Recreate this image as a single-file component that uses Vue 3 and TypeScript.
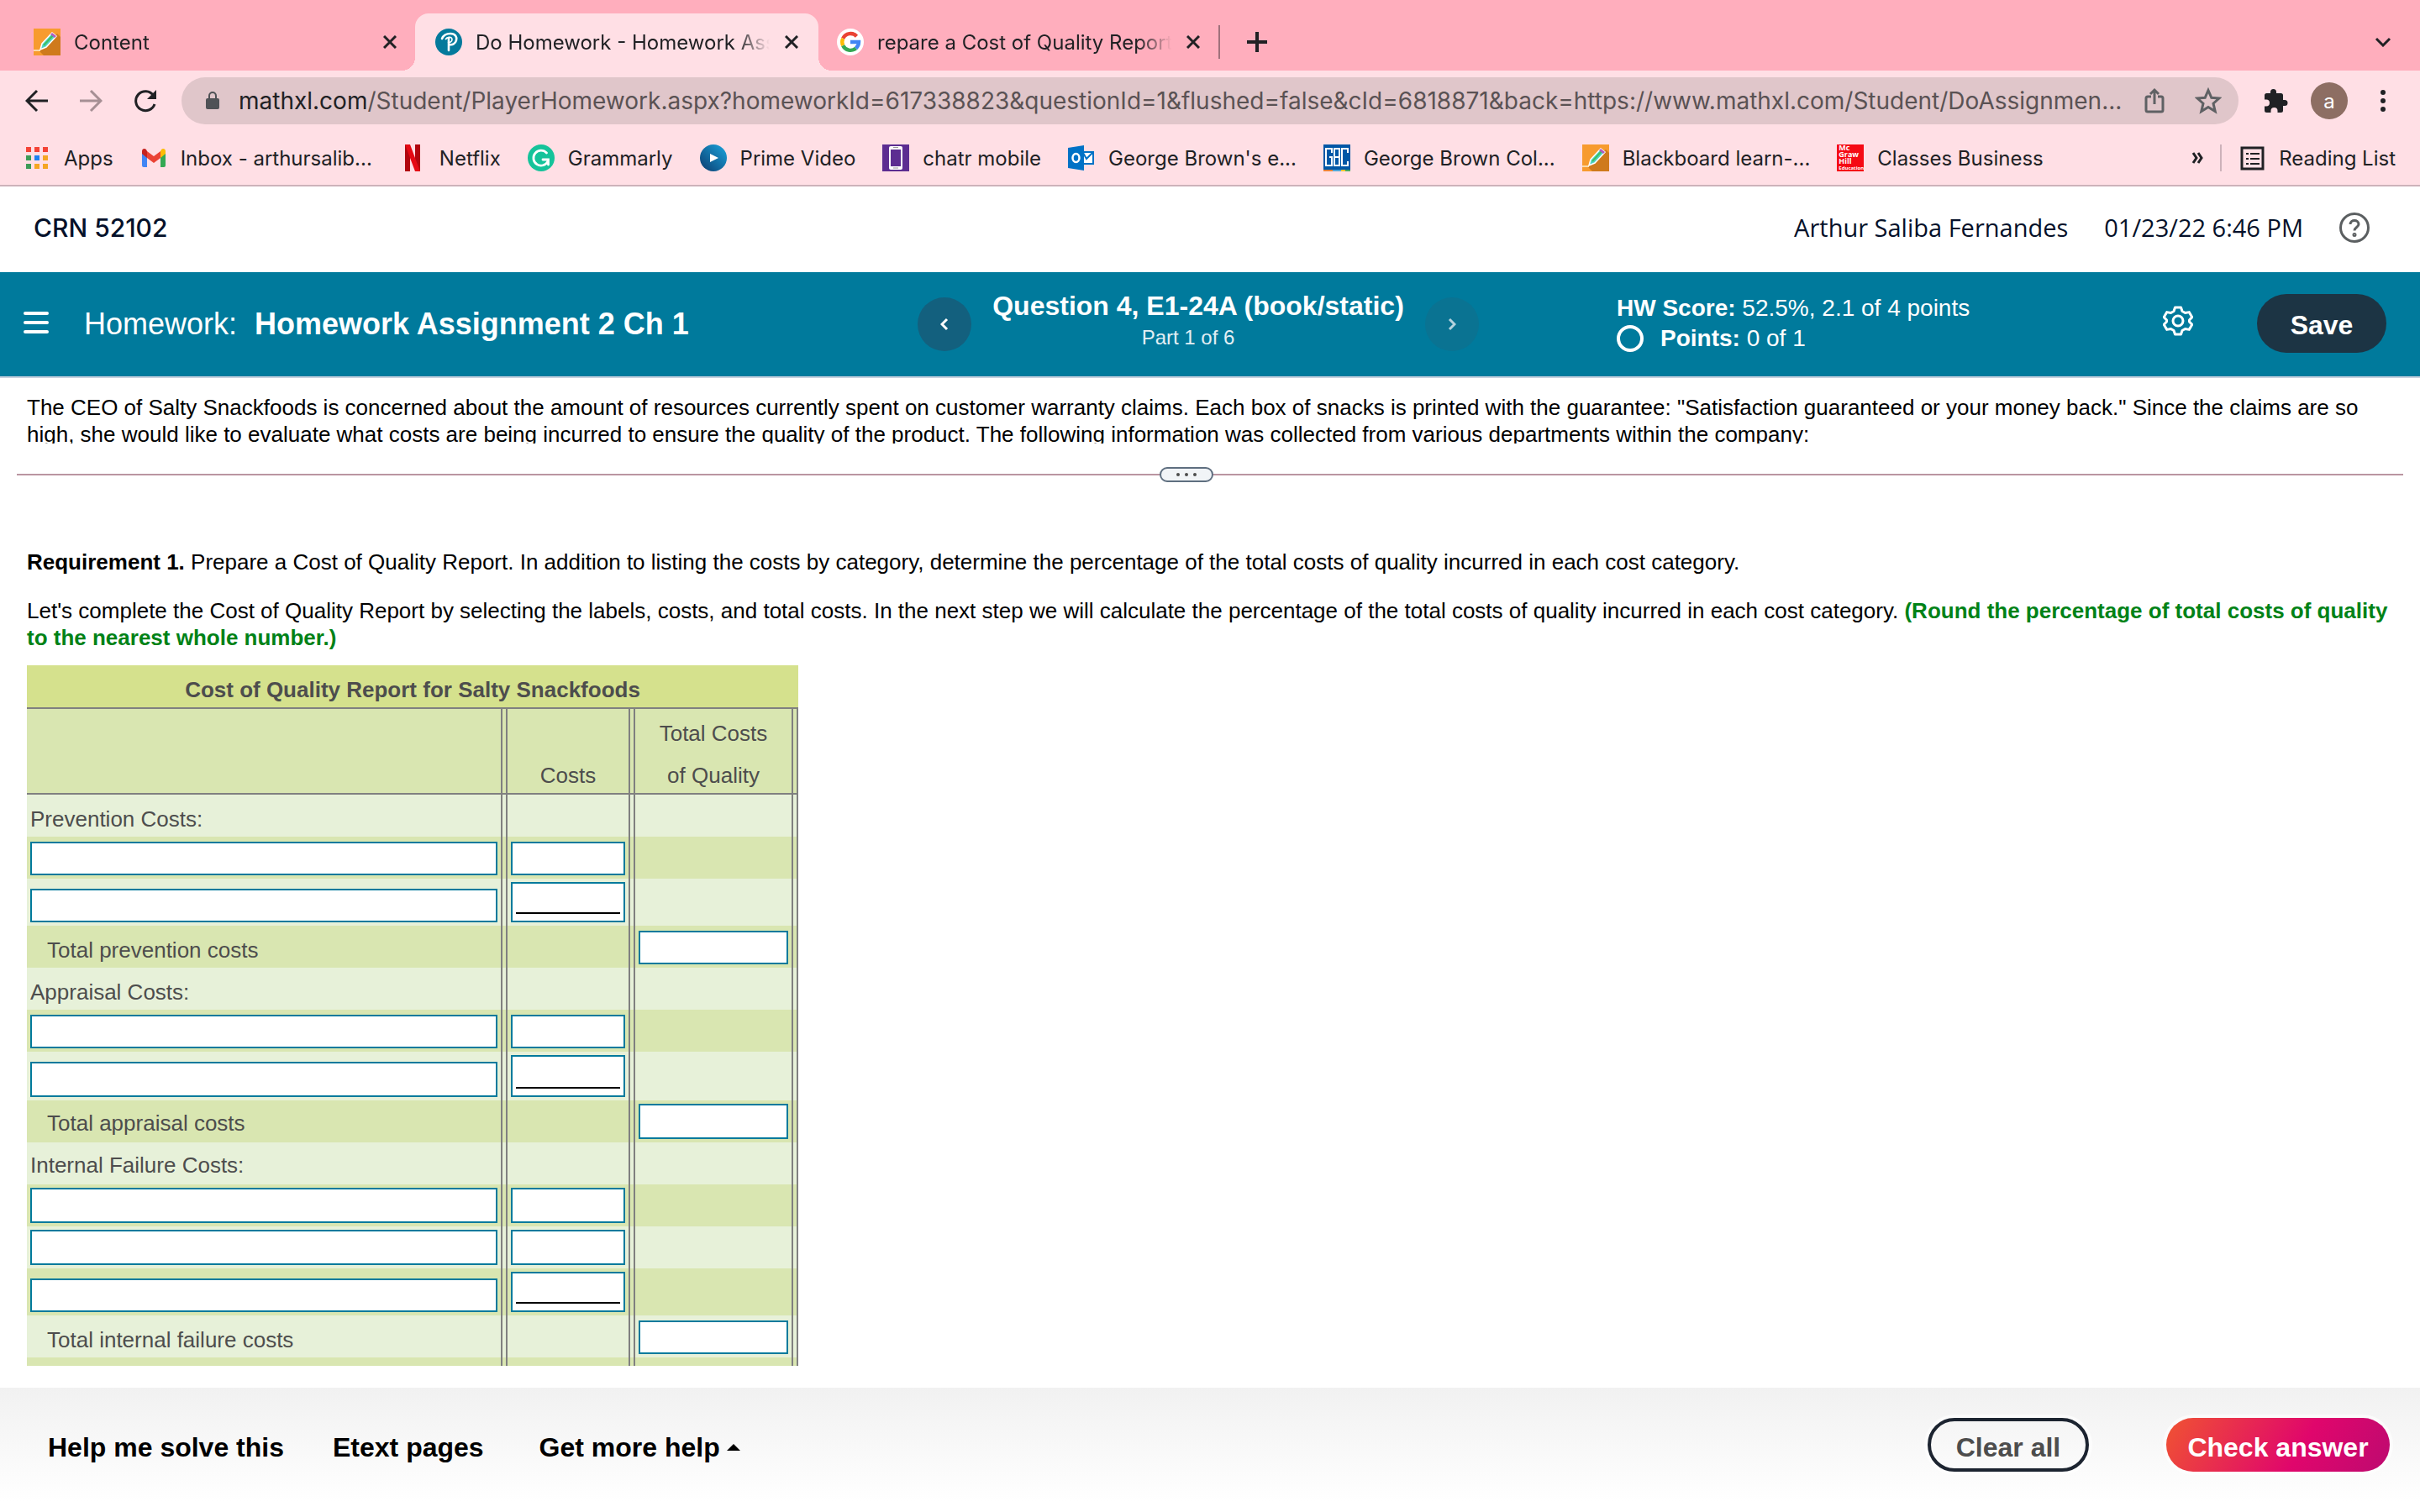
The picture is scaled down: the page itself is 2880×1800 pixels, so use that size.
<script setup lang="ts">
import { ref } from 'vue'

interface Bookmark {
  label: string
  icon: string
}

interface Row {
  label?: string
  total?: boolean
  cost?: boolean
  underlined?: boolean
  tall?: boolean
}

const bookmarks: Bookmark[] = [
  { label: 'Apps', icon: 'apps' },
  { label: 'Inbox - arthursalib...', icon: 'gmail' },
  { label: 'Netflix', icon: 'netflix' },
  { label: 'Grammarly', icon: 'grammarly' },
  { label: 'Prime Video', icon: 'prime' },
  { label: 'chatr mobile', icon: 'chatr' },
  { label: "George Brown's e...", icon: 'outlook' },
  { label: 'George Brown Col...', icon: 'gbc' },
  { label: 'Blackboard learn-...', icon: 'pencil' },
  { label: 'Classes Business', icon: 'mcgraw' },
]

const rows = ref<Row[]>([
  { label: 'Prevention Costs:' },
  { cost: true },
  { cost: true, underlined: true },
  { label: 'Total prevention costs', total: true },
  { label: 'Appraisal Costs:' },
  { cost: true },
  { cost: true, underlined: true, tall: true },
  { label: 'Total appraisal costs', total: true, tall: true },
  { label: 'Internal Failure Costs:', tall: true },
  { cost: true, tall: true },
  { cost: true, tall: true },
  { cost: true, underlined: true },
  { label: 'Total internal failure costs', total: true },
  {},
])
</script>

<template>
  <div class="window">
    <header class="browser">
      <div class="tabstrip" role="tablist">
        <div class="tab first" role="tab">
          <svg class="fav" viewBox="0 0 32 32">
            <rect width="32" height="32" fill="#f79b2e" />
            <path d="M28 6L32 10V32H12L6 26Z" fill="#cf7a1c" />
            <path d="M0 26h8" stroke="#fbd9a8" stroke-width="2" />
            <path d="M8 25L10 18L22 5L27 9L15 22Z" fill="#4fd3c4" stroke="#fff" stroke-width="1.5" />
            <path d="M12 20L23 8" stroke="#3fbf62" stroke-width="2" />
            <path d="M22 5L27 9L25 11L20 7Z" fill="#b05cc0" />
          </svg>
          <span class="tab-title">Content</span>
          <button class="close" aria-label="Close tab"><svg viewBox="0 0 16 16"><path d="M1 1L15 15M15 1L1 15" /></svg></button>
        </div>
        <div class="tab active" role="tab" aria-selected="true">
          <svg class="fav" viewBox="0 0 32 32">
            <circle cx="16" cy="16" r="16" fill="#047a9c" />
            <path d="M8 12C10 7 14 6 18 6C24 6 26 10 25 14C24 18 20 20 17 19M16 11V26" fill="none" stroke="#fff" stroke-width="2.6" stroke-linecap="round" />
            <path d="M12 13C14 10 20 9 20 13C20 16 17 17 15 16" fill="none" stroke="#fff" stroke-width="1.6" />
          </svg>
          <span class="tab-title">Do Homework - Homework Ass</span>
          <button class="close" aria-label="Close tab"><svg viewBox="0 0 16 16"><path d="M1 1L15 15M15 1L1 15" /></svg></button>
        </div>
        <div class="tab last" role="tab">
          <svg class="fav" viewBox="0 0 32 32">
            <circle cx="16" cy="16" r="16" fill="#fff" />
            <g fill="none" stroke-width="4.4">
              <path d="M23.5 9.2A10 10 0 0 0 7.2 11.8" stroke="#ea4335" />
              <path d="M7.2 11.8A10 10 0 0 0 7.2 20.2" stroke="#fbbc05" />
              <path d="M7.2 20.2A10 10 0 0 0 22.6 23.5" stroke="#34a853" />
              <path d="M22.6 23.5A10 10 0 0 0 26 16H16" stroke="#4285f4" />
            </g>
          </svg>
          <span class="tab-title">repare a Cost of Quality Report</span>
          <button class="close" aria-label="Close tab"><svg viewBox="0 0 16 16"><path d="M1 1L15 15M15 1L1 15" /></svg></button>
        </div>
        <span class="tab-divider"></span>
        <button class="new-tab" aria-label="New tab"><svg viewBox="0 0 24 24"><path d="M12 0V24M0 12H24" stroke-width="4" /></svg></button>
        <button class="tab-search" aria-label="Search tabs"><svg viewBox="0 0 20 12"><path d="M2 2L10 10L18 2" stroke-width="3" /></svg></button>
      </div>

      <div class="toolbar">
        <button aria-label="Back"><svg class="nav-icon" viewBox="0 0 28 28"><path d="M27 14H3M14 2L2 14L14 26" stroke-width="3" /></svg></button>
        <button aria-label="Forward"><svg class="nav-icon dim" viewBox="0 0 28 28"><path d="M1 14H25M14 2L26 14L14 26" stroke-width="3" /></svg></button>
        <button aria-label="Reload">
          <svg class="nav-icon" viewBox="0 0 28 28">
            <path d="M26 18A11.500 11.500 0 1 1 24.500 7.500" stroke-width="3" />
            <path d="M28 1V12H17Z" fill="#202124" stroke="none" />
          </svg>
        </button>
        <div class="omnibox">
          <svg class="lock" viewBox="0 0 18 24"><rect x="1" y="9" width="16" height="13" rx="2" fill="#4f5256" /><path d="M5 10V6a4 4 0 0 1 8 0v4" fill="none" stroke="#4f5256" stroke-width="2" /></svg>
          <span class="url"><b>mathxl.com</b>/Student/PlayerHomework.aspx?homeworkId=617338823&amp;questionId=1&amp;flushed=false&amp;cId=6818871&amp;back=https://www.mathxl.com/Student/DoAssignmen...</span>
          <button aria-label="Share"><svg class="share" viewBox="0 0 24 32"><path d="M8 11H4a2 2 0 0 0-2 2V27a2 2 0 0 0 2 2H20a2 2 0 0 0 2-2V13a2 2 0 0 0-2-2H16M12 20V3M7 8L12 3L17 8" /></svg></button>
          <button aria-label="Bookmark this tab"><svg class="star" viewBox="0 0 32 32"><path d="M16 3.500L19.800 12.300L29 13L22 19.200L24.200 28.500L16 23.500L7.800 28.500L10 19.200L3 13L12.200 12.300Z" /></svg></button>
        </div>
        <button aria-label="Extensions">
          <svg class="puzzle" viewBox="0 0 30 30"><path d="M25 14h-2V8.500A2.500 2.500 0 0 0 20.500 6H15V4.500a3.500 3.500 0 0 0-7 0V6H3.500A2.500 2.500 0 0 0 1 8.500V13.500H3a4 4 0 0 1 0 8H1V26.500A2.500 2.500 0 0 0 3.500 29H8.500V27a4 4 0 0 1 8 0v2H20.500A2.500 2.500 0 0 0 23 26.500V21h2a3.500 3.500 0 0 0 0-7z" fill="#202124" /></svg>
        </button>
        <button class="avatar" aria-label="Profile">a</button>
        <button aria-label="Browser menu"><svg class="kebab" viewBox="0 0 8 28"><circle cx="4" cy="4" r="3" /><circle cx="4" cy="14" r="3" /><circle cx="4" cy="24" r="3" /></svg></button>
      </div>

      <nav class="bookmarks" aria-label="Bookmarks">
        <a v-for="b in bookmarks" :key="b.label" href="#" class="bookmark">
          <svg v-if="b.icon === 'apps'" class="fav" viewBox="0 0 32 32">
            <g fill="#f44336"><rect x="3" y="3" width="6" height="6" /><rect x="13" y="3" width="6" height="6" /><rect x="23" y="3" width="6" height="6" /></g>
            <rect x="3" y="13" width="6" height="6" fill="#3d9b57" /><rect x="13" y="13" width="6" height="6" fill="#1e80f0" /><rect x="23" y="13" width="6" height="6" fill="#f5a623" />
            <rect x="3" y="23" width="6" height="6" fill="#3d9b57" /><rect x="13" y="23" width="6" height="6" fill="#f5a623" /><rect x="23" y="23" width="6" height="6" fill="#f5a623" />
          </svg>
          <svg v-else-if="b.icon === 'gmail'" class="fav" viewBox="0 0 32 32">
            <path d="M2 8V25a2 2 0 0 0 2 2H8V14Z" fill="#4285f4" />
            <path d="M30 8V25a2 2 0 0 1-2 2H24V14Z" fill="#34a853" />
            <path d="M24 8V16L30 11V8C30 5 27 4 25 6Z" fill="#fbbc04" />
            <path d="M2 8V11L8 16V8L7 6C5 4 2 5 2 8Z" fill="#c5221f" />
            <path d="M8 8L16 14L24 8V16L16 22L8 16Z" fill="#ea4335" />
          </svg>
          <svg v-else-if="b.icon === 'netflix'" class="fav" viewBox="0 0 32 32">
            <path d="M7 0H13V32L7 32Z" fill="#b1060f" /><path d="M19 0H25V32H19Z" fill="#b1060f" /><path d="M7 0H13L25 32H19Z" fill="#e50914" />
          </svg>
          <svg v-else-if="b.icon === 'grammarly'" class="fav" viewBox="0 0 32 32">
            <circle cx="16" cy="16" r="16" fill="#15c39a" />
            <path d="M22.500 10A9 9 0 1 0 24 20M18 18H24.500V24" fill="none" stroke="#fff" stroke-width="2.800" stroke-linecap="round" />
          </svg>
          <svg v-else-if="b.icon === 'prime'" class="fav" viewBox="0 0 32 32">
            <defs><linearGradient id="prime" x1="1" y1="0" x2="0" y2="1"><stop offset="0" stop-color="#1aa6de" /><stop offset="1" stop-color="#0c3a6e" /></linearGradient></defs>
            <circle cx="16" cy="16" r="16" fill="url(#prime)" /><path d="M12 11L22 16L12 21Z" fill="#fff" />
          </svg>
          <svg v-else-if="b.icon === 'chatr'" class="fav" viewBox="0 0 32 32">
            <rect width="32" height="32" fill="#5c2d91" /><rect x="8" y="2" width="16" height="28" rx="2" fill="#fff" /><rect x="10" y="6" width="12" height="20" fill="#5c2d91" /><rect x="13" y="3" width="6" height="1" fill="#999" /><rect x="13" y="27" width="6" height="2" fill="#ccc" />
          </svg>
          <svg v-else-if="b.icon === 'outlook'" class="fav" viewBox="0 0 32 32">
            <rect x="17" y="9" width="13" height="14" fill="#fff" stroke="#0072c6" stroke-width="2" /><path d="M18 10L22 17L30 9" fill="none" stroke="#0072c6" stroke-width="2" />
            <path d="M0 4L19 1V31L0 28Z" fill="#0072c6" /><ellipse cx="9.500" cy="16" rx="4" ry="5" fill="none" stroke="#fff" stroke-width="2.500" />
          </svg>
          <svg v-else-if="b.icon === 'gbc'" class="fav" viewBox="0 0 32 32">
            <rect width="32" height="32" fill="#0057a6" />
            <g fill="none" stroke="#fff" stroke-width="2"><path d="M10 10V5H3V25H10V15H7M13 5V25H19V16L18 15L19 14V5ZM13 15H18M29 10V5H22V25H29V20" /></g>
            <rect y="30" width="11" height="2" fill="#e8833a" /><rect x="11" y="30" width="10" height="2" fill="#4fa6d8" /><rect x="21" y="30" width="5" height="2" fill="#f4c430" /><rect x="26" y="30" width="6" height="2" fill="#48a860" />
          </svg>
          <svg v-else-if="b.icon === 'pencil'" class="fav" viewBox="0 0 32 32">
            <rect width="32" height="32" fill="#f79b2e" />
            <path d="M28 6L32 10V32H12L6 26Z" fill="#cf7a1c" />
            <path d="M0 26h8" stroke="#fbd9a8" stroke-width="2" />
            <path d="M8 25L10 18L22 5L27 9L15 22Z" fill="#4fd3c4" stroke="#fff" stroke-width="1.5" />
            <path d="M12 20L23 8" stroke="#3fbf62" stroke-width="2" />
            <path d="M22 5L27 9L25 11L20 7Z" fill="#b05cc0" />
          </svg>
          <span v-else class="fav mcgraw"><span>Mc</span><span>Graw</span><span>Hill</span><small>Education</small></span>
          <span>{{ b.label }}</span>
        </a>
        <button class="more" aria-label="More bookmarks"><svg viewBox="0 0 14 14"><path d="M2 1L6 7L2 13M8 1L12 7L8 13" /></svg></button>
        <span class="mark-divider"></span>
        <a href="#" class="bookmark reading">
          <svg class="fav" viewBox="0 0 32 32"><rect x="4" y="4" width="25" height="25" fill="none" stroke="#202124" stroke-width="3" /><path d="M9 11h3M9 17h3M9 23h3M14 11h11M14 17h11M14 23h11" stroke="#202124" stroke-width="2" /></svg>
          <span>Reading List</span>
        </a>
      </nav>
    </header>

    <div class="course">
      <span class="crn">CRN 52102</span>
      <span>Arthur Saliba Fernandes</span>
      <time>01/23/22 6:46 PM</time>
      <button aria-label="Help"><svg class="help" viewBox="0 0 36 36"><circle cx="18" cy="18" r="16.500" /><path d="M13 14C13 8 23 8 23 14C23 17.500 18 17.500 18 21.500" /><circle cx="18" cy="26.500" r="1" /></svg></button>
    </div>

    <div class="banner">
      <div class="banner-left">
        <button aria-label="Menu"><svg class="burger" viewBox="0 0 30 26"><path d="M2 2H28M2 13H28M2 24H28" /></svg></button>
        <h1><span>Homework:</span> <b>Homework Assignment 2 Ch 1</b></h1>
      </div>
      <div class="stepper">
        <button class="round" aria-label="Previous question"><svg viewBox="0 0 10 16"><path d="M8 2L2 8L8 14" /></svg></button>
        <div class="question">
          <h2>Question 4, E1-24A (book/static)</h2>
          <p>Part 1 of 6</p>
        </div>
        <button class="round faded" aria-label="Next question"><svg viewBox="0 0 10 16"><path d="M2 2L8 8L2 14" /></svg></button>
      </div>
      <div class="banner-right">
        <div class="score">
          <p><b>HW Score:</b> 52.5%, 2.1 of 4 points</p>
          <p class="points"><svg viewBox="0 0 32 32"><circle cx="16" cy="16" r="14" /></svg><span><b>Points:</b> 0 of 1</span></p>
        </div>
        <button class="settings" aria-label="Settings">
          <svg viewBox="0 0 36 36"><path d="M14.500 2h7l1.500 4.500 3.500 2 4.700-.9 3.500 6-3.200 3.400v2l3.200 3.400-3.500 6-4.700-.9-3.500 2L21.500 34h-7L13 29.500l-3.500-2-4.700.9-3.500-6L4.500 19v-2L1.300 13.600l3.500-6 4.700.9 3.500-2Z" /><circle cx="18" cy="18" r="6" /></svg>
        </button>
        <button class="save">Save</button>
      </div>
    </div>

    <main class="work">
      <div class="prompt">The CEO of Salty Snackfoods is concerned about the amount of resources currently spent on customer warranty claims. Each box of snacks is printed with the guarantee: "Satisfaction guaranteed or your money back." Since the claims are so high, she would like to evaluate what costs are being incurred to ensure the quality of the product. The following information was collected from various departments within the company:</div>
      <div class="splitter">
        <button aria-label="Resize panes"><i></i><i></i><i></i></button>
      </div>
      <div class="answer">
        <p><b>Requirement 1.</b> Prepare a Cost of Quality Report. In addition to listing the costs by category, determine the percentage of the total costs of quality incurred in each cost category.</p>
        <p>Let's complete the Cost of Quality Report by selecting the labels, costs, and total costs. In the next step we will calculate the percentage of the total costs of quality incurred in each cost category. <b class="hint">(Round the percentage of total costs of quality to the nearest whole number.)</b></p>
        <table>
          <colgroup><col class="c1" /><col class="c2" /><col class="c3" /></colgroup>
          <thead>
            <tr class="title"><th colspan="3">Cost of Quality Report for Salty Snackfoods</th></tr>
            <tr class="heads">
              <th></th>
              <th><span>Costs</span></th>
              <th><span>Total Costs</span><span>of Quality</span></th>
            </tr>
          </thead>
          <tbody>
            <tr v-for="(row, i) in rows" :key="i" :class="{ tall: row.tall }">
              <td>
                <span v-if="row.label" class="label" :class="{ indent: row.total }">{{ row.label }}</span>
                <input v-else-if="row.cost" type="text" :aria-label="'Cost label, row ' + (i + 1)" />
              </td>
              <td>
                <span v-if="row.underlined" class="sum"><input type="text" :aria-label="'Cost, row ' + (i + 1)" /></span>
                <input v-else-if="row.cost" type="text" :aria-label="'Cost, row ' + (i + 1)" />
              </td>
              <td><input v-if="row.total" type="text" :aria-label="row.label" /></td>
            </tr>
          </tbody>
        </table>
      </div>
    </main>

    <footer class="actions">
      <button class="link">Help me solve this</button>
      <button class="link">Etext pages</button>
      <button class="link">Get more help<svg viewBox="0 0 16 8"><path d="M0 8L8 0L16 8Z" /></svg></button>
      <button class="pill clear">Clear all</button>
      <button class="pill check">Check answer</button>
    </footer>
  </div>
</template>

<style>
body {
  margin: 0;
  background: #fff;
}
</style>

<style scoped>
* {
  box-sizing: border-box;
}
.window {
  height: 100vh;
  display: flex;
  flex-direction: column;
  overflow: hidden;
  font-family: "Liberation Sans", Arial, sans-serif;
  color: #000;
}
button {
  border: 0;
  background: none;
  padding: 0;
  margin: 0;
  font: inherit;
  color: inherit;
  display: flex;
  align-items: center;
  justify-content: center;
  flex: none;
}
p,
h1,
h2 {
  margin: 0;
  font-weight: 400;
}
svg {
  display: block;
  flex: none;
}

/* browser frame */
.browser {
  flex: none;
  font-family: Inter, "Noto Sans", sans-serif;
  font-size: 24px;
  color: #202124;
  background: #ffdfe5;
  border-bottom: 2px solid #cdb2ba;
}
.tabstrip {
  height: 84px;
  padding-top: 16px;
  display: flex;
  align-items: center;
  background: #ffaebd;
}
.tabstrip svg,
.toolbar svg {
  fill: none;
  stroke: #202124;
}
.tabstrip .fav {
  stroke: none;
}
.fav {
  width: 32px;
  height: 32px;
  flex: none;
}
.tab {
  width: 480px;
  height: 68px;
  padding: 0 22px 0 24px;
  display: flex;
  align-items: center;
  gap: 16px;
}
.tab.first {
  width: 494px;
  padding: 0 20px 0 40px;
}
.tab.active {
  position: relative;
  background: #ffdfe5;
  border-radius: 16px 16px 0 0;
}
.tab.active::before,
.tab.active::after {
  content: "";
  position: absolute;
  bottom: 0;
  width: 16px;
  height: 16px;
}
.tab.active::before {
  right: 100%;
  background: radial-gradient(circle at 0 0, transparent 16px, #ffdfe5 16px);
}
.tab.active::after {
  left: 100%;
  background: radial-gradient(circle at 100% 0, transparent 16px, #ffdfe5 16px);
}
.tab.last {
  width: 476px;
  padding: 0 20px 0 22px;
}
.tab-title {
  flex: 1;
  min-width: 0;
  overflow: hidden;
  white-space: nowrap;
  mask-image: linear-gradient(to right, #000 calc(100% - 40px), transparent);
}
.close svg {
  width: 16px;
  height: 16px;
  stroke-width: 3;
}
.close {
  width: 20px;
}
.tab-divider {
  width: 2px;
  height: 40px;
  background: #a0717b;
}
.new-tab {
  margin-left: 32px;
}
.new-tab svg {
  width: 24px;
  height: 24px;
}
.tab-search {
  margin-left: auto;
  margin-right: 34px;
}
.tab-search svg {
  width: 20px;
  height: 12px;
}
.toolbar {
  height: 72px;
  display: flex;
  align-items: center;
  padding: 0 40px 0 30px;
}
.nav-icon {
  width: 28px;
  height: 28px;
  margin-right: 36px;
}
.toolbar .dim {
  stroke: #a68f94;
}
.omnibox {
  flex: 1;
  min-width: 0;
  height: 56px;
  margin-right: 30px;
  margin-left: -6px;
  padding: 0 20px 0 28px;
  border-radius: 28px;
  background: #e0c6ca;
  display: flex;
  align-items: center;
}
.lock {
  width: 18px;
  height: 24px;
  margin-right: 22px;
}
.toolbar .lock {
  stroke: none;
}
.url {
  flex: 1;
  min-width: 0;
  overflow: hidden;
  white-space: nowrap;
  font-size: 28px;
  color: #5a5254;
}
.url b {
  font-weight: 400;
  color: #202124;
}
.share {
  width: 24px;
  height: 32px;
  stroke-width: 3;
  margin-right: 36px;
}
.star {
  width: 32px;
  height: 32px;
  stroke-width: 3;
}
.toolbar .share,
.toolbar .star {
  stroke: #5f6164;
}
.puzzle {
  width: 30px;
  height: 30px;
}
.toolbar .puzzle {
  stroke: none;
}
.avatar {
  width: 44px;
  height: 44px;
  margin: 0 38px 0 26px;
  border-radius: 50%;
  background: #8d6e63;
  color: #fff;
}
.kebab {
  width: 8px;
  height: 28px;
}
.toolbar .kebab {
  fill: #202124;
  stroke: none;
}
.bookmarks {
  height: 64px;
  padding: 0 29px 0 28px;
  display: flex;
  align-items: center;
  gap: 32px;
}
.bookmark {
  display: flex;
  align-items: center;
  gap: 16px;
  white-space: nowrap;
  color: inherit;
  text-decoration: none;
}
.mcgraw {
  display: flex;
  flex-direction: column;
  padding-left: 2px;
  background: #f50a14;
  color: #fff;
  font: bold 9px/8px "Open Sans", sans-serif;
}
.mcgraw small {
  font-size: 6px;
}
.more {
  margin-left: auto;
}
.more svg {
  width: 14px;
  height: 14px;
  fill: none;
  stroke: #202124;
  stroke-width: 3;
}
.mark-divider {
  width: 2px;
  height: 32px;
  margin-left: -12px;
  background: #cdb2ba;
}
.reading {
  margin-left: -12px;
}

/* course bar */
.course {
  flex: none;
  height: 102px;
  padding: 0 60px 4px 40px;
  display: flex;
  align-items: center;
  gap: 43px;
  color: #05112a;
  font: 29px/40px "Open Sans", sans-serif;
}
.crn {
  margin-right: auto;
  font-family: Inter, sans-serif;
  font-size: 30px;
  font-weight: 500;
}
.help {
  width: 36px;
  height: 36px;
  fill: none;
  stroke: #5b5f61;
  stroke-width: 3;
}

/* assignment banner */
.banner {
  flex: none;
  height: 126px;
  display: grid;
  grid-template-columns: 1fr 668px 1120px;
  background: #007a9c;
  border-bottom: 2px solid #c7d0de;
  color: #fff;
}
.banner-left {
  display: flex;
  align-items: center;
  gap: 42px;
  padding-left: 28px;
}
.burger {
  width: 30px;
  height: 26px;
  margin-bottom: 4px;
  stroke: #fff;
  stroke-width: 4;
  stroke-linecap: round;
}
h1 {
  font-size: 36px;
  line-height: 40px;
  white-space: nowrap;
}
h1 span {
  margin-right: 11px;
}
.stepper,
.banner-right {
  display: flex;
  align-items: center;
}
.stepper {
  justify-content: space-between;
}
.round {
  width: 64px;
  height: 64px;
  border-radius: 50%;
  background: #13607e;
}
.round svg {
  width: 10px;
  height: 16px;
  fill: none;
  stroke: #fff;
  stroke-width: 3;
}
.round.faded {
  background: #0a7392;
}
.round.faded svg {
  stroke: #b5d3de;
}
.question {
  padding-bottom: 8px;
  text-align: center;
}
h2 {
  font-size: 32px;
  line-height: 40px;
  font-weight: 700;
}
.question p {
  padding-right: 24px;
  font-size: 24px;
  line-height: 36px;
  color: #e3eff4;
}
.banner-right {
  padding: 0 40px 2px 164px;
}
.score {
  font-size: 28px;
  line-height: 36px;
}
.points {
  display: flex;
  align-items: center;
  gap: 20px;
}
.points svg {
  width: 32px;
  height: 32px;
  fill: none;
  stroke: #fff;
  stroke-width: 4;
}
.settings {
  margin-left: auto;
  margin-right: 76px;
  padding-bottom: 6px;
}
.settings svg {
  width: 36px;
  height: 36px;
  fill: none;
  stroke: #fff;
  stroke-width: 3;
  stroke-linejoin: round;
}
.save {
  width: 154px;
  height: 70px;
  padding-top: 4px;
  border-radius: 35px;
  background: #1c3444;
  font-size: 32px;
  font-weight: 700;
}

/* question area */
.work {
  flex: 1;
  min-height: 0;
  margin-bottom: 26px;
  display: flex;
  flex-direction: column;
  font-size: 26px;
  line-height: 32px;
}
.prompt {
  flex: none;
  height: 78px;
  padding: 19px 28px 0 32px;
  overflow: hidden;
}
.splitter {
  flex: none;
  height: 18px;
  margin: 28px 20px 0;
  display: flex;
  justify-content: center;
  align-items: center;
  background: linear-gradient(#ba95a1, #ba95a1) center / 100% 2px no-repeat;
}
.splitter button {
  width: 64px;
  height: 18px;
  margin-right: 56px;
  gap: 6px;
  border: 2px solid #5f6f80;
  border-radius: 9px;
  background: #f1f4f7;
}
.splitter i {
  width: 4px;
  height: 4px;
  border-radius: 50%;
  background: #4d4d4d;
}
.answer {
  flex: 1;
  min-height: 0;
  overflow: hidden;
  padding: 79px 28px 0 32px;
}
.answer p {
  margin-bottom: 26px;
}
.answer p + p {
  margin-bottom: 17px;
}
.hint {
  color: #008217;
}
table {
  width: 918px;
  table-layout: fixed;
  border-collapse: separate;
  border-spacing: 0;
  color: #4d4d4d;
}
.c1 {
  width: 572px;
}
.c2 {
  width: 152px;
}
.c3 {
  width: 194px;
}
th,
td {
  --row: #d9e6b1;
  padding: 0 12px 0 4px;
  background: var(--row);
  box-shadow: inset -2px 0 #808080, inset -6px 0 var(--row), inset -8px 0 #808080;
  line-height: 42px;
  text-align: left;
  vertical-align: bottom;
}
tbody tr {
  height: 50px;
}
tbody tr:nth-child(odd) td {
  --row: #e7f1d9;
}
tr.title th {
  height: 52px;
  padding: 8px 0 0;
  background: #d5e18d;
  border-bottom: 2px solid #808080;
  box-shadow: none;
  text-align: center;
}
tr.heads th {
  height: 102px;
  border-bottom: 2px solid #808080;
  font-weight: 400;
  text-align: center;
}
.heads span,
.label {
  display: block;
  padding-top: 8px;
  white-space: nowrap;
}
.tall .label {
  padding: 6px 0 2px;
}
.label.indent {
  padding-left: 20px;
}
td input {
  display: block;
  width: 100%;
  height: 40px;
  margin: 0 0 4px;
  padding: 0 6px;
  border: 2px solid #007a9c;
  border-radius: 0;
  background: #fff;
  font: inherit;
}
.tall input {
  height: 42px;
}
.sum {
  display: block;
  margin: 4px 0;
  padding: 0 4px 8px;
  border: 2px solid #007a9c;
  background: #fff;
}
.sum input {
  height: 36px;
  margin: 0;
  padding: 0;
  border: 0;
  border-bottom: 2px solid #000;
}
.tall .sum input {
  height: 38px;
}

/* footer */
.actions {
  flex: none;
  height: 148px;
  padding: 0 36px 12px 57px;
  display: flex;
  align-items: center;
  background: linear-gradient(#f1f1f1, #fff 92%);
  font-size: 32px;
  font-weight: 700;
}
.link {
  height: 64px;
  padding-top: 6px;
  margin-right: 58px;
  gap: 8px;
}
.link:nth-child(2) {
  margin-right: 66px;
}
.link svg {
  width: 16px;
  height: 8px;
}
.pill {
  height: 64px;
  padding-top: 6px;
  border-radius: 32px;
  box-shadow: 0 0 0 4px rgba(255, 255, 255, 0.6);
}
.clear {
  width: 192px;
  margin-left: auto;
  margin-right: 92px;
  border: 4px solid #1c2430;
  color: #4d4d4d;
}
.check {
  width: 266px;
  background: linear-gradient(120deg, #f05332, #e0066c 60%, #bd0a70);
  color: #fff;
}
</style>
